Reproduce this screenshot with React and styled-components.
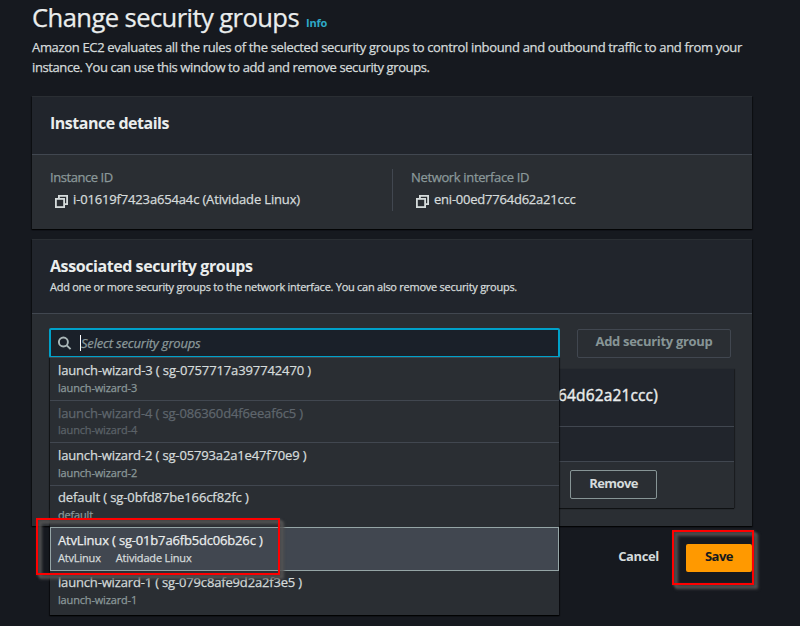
import React from 'react';
import styled, { createGlobalStyle, css } from 'styled-components';

const color = {
  page: '#16191f',
  header: '#21252c',
  panel: '#2a2e33',
  line: '#414750',
  outline: '#95a5a6',
  text: '#d5dbdb',
  strong: '#eaeded',
  muted: '#8b999a',
  accent: '#00a1c9',
  orange: '#ff9900',
  marker: '#ff0000',
};

const GlobalStyle = createGlobalStyle`
  *, *::before, *::after { box-sizing: border-box; }
  body {
    margin: 0;
    background: ${color.page};
    color: ${color.text};
    font: 400 13px/20px "Open Sans", "Noto Sans", sans-serif;
    overflow: hidden;
    -webkit-text-stroke: 0.25px currentColor;
  }
`;

/* Type: $track is the letter spacing in pixels. */
const tracked = css`
  letter-spacing: ${({ $track = 0 }) => $track}px;
  white-space: nowrap;
`;

const Page = styled.main`
  width: 800px;
  height: 626px;
  padding: 1px 48px 0 32px;
  overflow: hidden;
`;

const TitleRow = styled.header`
  display: flex;
  align-items: baseline;
  gap: 7px;
  height: 34px;
`;

const Title = styled.h1`
  ${tracked}
  margin: 0;
  font-size: 25.6px;
  font-weight: 400;
  line-height: 34px;
  color: ${color.strong};
`;

const InfoLink = styled.a`
  ${tracked}
  font-size: 11px;
  font-weight: 700;
  color: #2ea9c8;
  -webkit-text-stroke: 0;
`;

const Intro = styled.p`
  margin: 2px 0 19px;
`;

const IntroLine = styled.span`
  ${tracked}
  display: block;
`;

const Card = styled.section`
  width: 720px;
  height: ${({ $height }) => $height}px;
  margin-bottom: 10px;
  border-top: 1px solid ${color.panel};
  background: ${color.panel};
  box-shadow: 0 1px 1px rgba(0, 0, 0, 0.6), 1px 1px 1px rgba(0, 0, 0, 0.35), -1px 1px 1px rgba(0, 0, 0, 0.35);
`;

const CardHeader = styled.div`
  height: ${({ $height }) => $height}px;
  padding: 16px 18px 0;
  border-bottom: 1px solid ${color.line};
  background: ${color.header};
`;

const CardTitle = styled.h2`
  ${tracked}
  margin: 0;
  font-size: 16px;
  font-weight: 700;
  line-height: 20px;
  color: ${color.strong};
  -webkit-text-stroke: 0;
`;

const CardHint = styled.p`
  ${tracked}
  margin: 3px 0 0;
  font-size: 11px;
  line-height: 16px;
`;

const DetailGrid = styled.div`
  display: grid;
  grid-template-columns: 342px 1fr;
  padding: 14px 18px 0;
`;

const Detail = styled.div`
  height: 42px;
  padding-left: ${({ $divided }) => ($divided ? 18 : 0)}px;
  border-left: ${({ $divided }) => ($divided ? `1px solid ${color.line}` : '0')};
`;

const Label = styled.div`
  ${tracked}
  margin-top: -2px;
  color: ${color.muted};
`;

const Value = styled.div`
  ${tracked}
  display: flex;
  gap: 5px;
  margin-top: 2px;
  padding-left: 5px;

  svg { margin-top: 6px; }
`;

const SearchRow = styled.div`
  display: flex;
  gap: 17px;
  height: 45px;
  padding: 14px 21px 0 17px;
`;

const Combo = styled.div`
  position: relative;
  width: 511px;
`;

const SearchField = styled.div`
  display: flex;
  align-items: center;
  height: 30px;
  padding: 0 7px;
  border: 2px solid ${color.accent};
  border-radius: 2px;
  background: #1a2029;
`;

const Caret = styled.span`
  width: 1px;
  height: 16px;
  margin-left: 8px;
  background: #fff;
`;

const Placeholder = styled.span`
  ${tracked}
  margin-top: -1px;
  font-style: italic;
  color: ${color.muted};
`;

const Menu = styled.ul`
  position: absolute;
  top: 29px;
  left: 1px;
  z-index: 2;
  display: grid;
  grid-template-rows: 43px 42px 43px 42px 43px 45px;
  width: 509px;
  margin: 0;
  padding: 0;
  list-style: none;
  background: ${color.panel};
  box-shadow: 0 1px 1px rgba(0, 0, 0, 0.7), 1px 1px 1px rgba(0, 0, 0, 0.45), -1px 1px 1px rgba(0, 0, 0, 0.45);
`;

const Option = styled.li`
  padding: 2px 8px 0;
  border-top: 1px solid ${color.line};
  color: ${({ $disabled }) => ($disabled ? '#5f666d' : color.text)};

  ${({ $selected }) =>
    $selected &&
    css`
      z-index: 1;
      height: 44px;
      padding-left: 7px;
      border: 1px solid ${color.outline};
      background: #414750;
      color: ${color.strong};
    `}
`;

const OptionTitle = styled.div`
  ${tracked}
  margin-top: ${({ $lifted }) => ($lifted ? -1 : 0)}px;
  margin-bottom: ${({ $lifted }) => ($lifted ? 1 : 0)}px;
`;

const OptionTags = styled.div`
  display: flex;
  gap: 15px;
  margin-top: ${({ $raised }) => ($raised ? -1 : 0)}px;
  font-size: 11px;
  line-height: 16px;
  color: ${({ $tone }) => $tone};
`;

const Tag = styled.span`
  ${tracked}
`;

const Button = styled.button`
  ${tracked}
  height: ${({ $height = 29 }) => $height}px;
  width: ${({ $width }) => $width}px;
  padding: 0 0 3px;
  border: 1px solid ${({ $border }) => $border || 'transparent'};
  border-radius: 2px;
  background: ${({ $fill }) => $fill || 'transparent'};
  color: ${({ $ink }) => $ink || color.text};
  font-family: inherit;
  font-size: 13px;
  font-weight: 700;
  line-height: 20px;
  -webkit-text-stroke: 0;
`;

const AddButton = styled(Button)`
  margin-top: 1px;
  padding-bottom: 5px;
`;

const GroupCard = styled.div`
  width: 684px;
  height: 139px;
  margin: 10px 0 0 18px;
  background: ${color.panel};
  box-shadow: 0 1px 1px rgba(0, 0, 0, 0.6), 1px 0 1px rgba(0, 0, 0, 0.3);
`;

const GroupHeading = styled.div`
  ${tracked}
  height: 58px;
  padding: 16px 0 0 508px;
  border-bottom: 1px solid ${color.line};
  background: ${color.header};
  font-size: 15.5px;
  color: ${color.strong};
  -webkit-text-stroke: 0.4px currentColor;
`;

const GroupColumns = styled.div`
  height: 35px;
  border-bottom: 1px solid ${color.line};
  background: ${color.header};
`;

const GroupRow = styled.div`
  padding: 8px 0 0 520px;
`;

const Footer = styled.footer`
  display: flex;
  justify-content: flex-end;
  align-items: center;
  width: 720px;
  margin-top: 17px;
  gap: 14px;
`;

const Marker = styled.div`
  position: absolute;
  z-index: 3;
  left: ${({ $x }) => $x}px;
  top: ${({ $y }) => $y}px;
  width: ${({ $w }) => $w}px;
  height: ${({ $h }) => $h}px;
  border: 2px solid ${color.marker};
  filter: drop-shadow(3px 3px 1px #555) drop-shadow(1px 1px 1px #4a4a4a);
  pointer-events: none;
`;

function CopyIcon() {
  return (
    <svg width="13" height="13" viewBox="0 0 13 13" fill="none" stroke={color.text} strokeWidth="1.8">
      <path d="M3.9 3V0.9H12.1V9.1H10" />
      <rect x="0.9" y="3.9" width="8.2" height="8.2" />
    </svg>
  );
}

function SearchIcon() {
  return (
    <svg width="14" height="14" viewBox="0 0 14 14" fill="none" stroke="#aab7b8" strokeWidth="1.9">
      <circle cx="5.4" cy="6" r="4.5" />
      <path d="M8.7 9.3L12.6 13.2" />
    </svg>
  );
}

const OPTIONS = [
  { title: 'launch-wizard-3 ( sg-0757717a397742470 )', tags: ['launch-wizard-3'], track: -0.119 },
  { title: 'launch-wizard-4 ( sg-086360d4f6eeaf6c5 )', tags: ['launch-wizard-4'], track: -0.143, disabled: true, raised: true },
  { title: 'launch-wizard-2 ( sg-05793a2a1e47f70e9 )', tags: ['launch-wizard-2'], track: -0.144 },
  { title: 'default ( sg-0bfd87be166cf82fc )', tags: ['default'], track: -0.11, lifted: true, raised: true },
  { title: 'AtvLinux ( sg-01b7a6fb5dc06b26c )', tags: ['AtvLinux', 'Atividade Linux'], track: -0.17, selected: true },
  { title: 'launch-wizard-1 ( sg-079c8afe9d2a2f3e5 )', tags: ['launch-wizard-1'], track: -0.162, lifted: true, raised: true },
];

function tagTone(option) {
  if (option.selected) return color.text;
  return option.disabled ? '#5b6268' : color.muted;
}

export default function App() {
  return (
    <>
      <GlobalStyle />
      <Page>
        <TitleRow>
          <Title $track={-0.589}>Change security groups</Title>
          <InfoLink $track={-0.235}>Info</InfoLink>
        </TitleRow>
        <Intro>
          <IntroLine $track={-0.334}>
            Amazon EC2 evaluates all the rules of the selected security groups to control inbound and outbound traffic to and from your
          </IntroLine>
          <IntroLine $track={-0.4}>instance. You can use this window to add and remove security groups.</IntroLine>
        </Intro>

        <Card $height={133}>
          <CardHeader $height={58}>
            <CardTitle $track={-0.477}>Instance details</CardTitle>
          </CardHeader>
          <DetailGrid>
            <Detail>
              <Label $track={-0.44}>Instance ID</Label>
              <Value $track={-0.155}>
                <CopyIcon />
                i-01619f7423a654a4c (Atividade Linux)
              </Value>
            </Detail>
            <Detail $divided>
              <Label $track={-0.35}>Network interface ID</Label>
              <Value $track={-0.223}>
                <CopyIcon />
                eni-00ed7764d62a21ccc
              </Value>
            </Detail>
          </DetailGrid>
        </Card>

        <Card $height={287}>
          <CardHeader $height={74}>
            <CardTitle $track={-0.427}>Associated security groups</CardTitle>
            <CardHint $track={-0.262}>
              Add one or more security groups to the network interface. You can also remove security groups.
            </CardHint>
          </CardHeader>
          <SearchRow>
            <Combo>
              <SearchField>
                <SearchIcon />
                <Caret />
                <Placeholder $track={-0.19}>Select security groups</Placeholder>
              </SearchField>
              <Menu>
                {OPTIONS.map((option) => (
                  <Option key={option.title} $selected={option.selected} $disabled={option.disabled}>
                    <OptionTitle $track={option.track} $lifted={option.lifted}>{option.title}</OptionTitle>
                    <OptionTags $raised={option.raised} $tone={tagTone(option)}>
                      {option.tags.map((tag) => (
                        <Tag key={tag} $track={-0.17}>{tag}</Tag>
                      ))}
                    </OptionTags>
                  </Option>
                ))}
              </Menu>
            </Combo>
            <AddButton $width={154} $track={-0.307} $border={color.line} $ink="#879596">Add security group</AddButton>
          </SearchRow>
          <GroupCard>
            <GroupHeading $track={0.15}>64d62a21ccc)</GroupHeading>
            <GroupColumns />
            <GroupRow>
              <Button $width={87} $track={-0.6} $border="#879596">Remove</Button>
            </GroupRow>
          </GroupCard>
        </Card>

        <Footer>
          <Button $width={67} $track={-0.419}>Cancel</Button>
          <Button $width={66} $height={28} $track={-0.5} $fill={color.orange} $ink="#16191f">Save</Button>
        </Footer>
      </Page>
      <Marker $x={36} $y={518} $w={244} $h={57} />
      <Marker $x={672} $y={530} $w={82} $h={55} />
    </>
  );
}
